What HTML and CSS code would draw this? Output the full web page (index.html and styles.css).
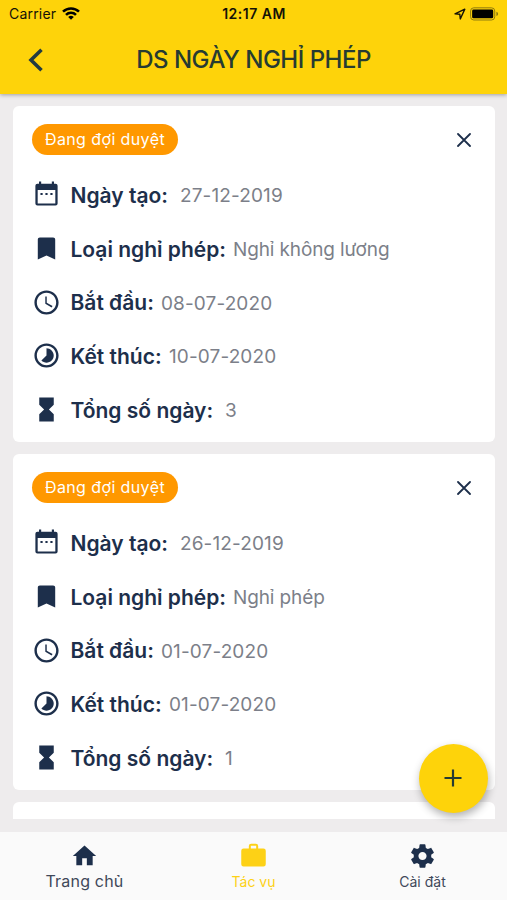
FILE: index.html
```html
<!DOCTYPE html>
<html lang="vi">
<head>
<meta charset="utf-8">
<meta name="viewport" content="width=device-width, initial-scale=1">
<title>DS NGÀY NGHỈ PHÉP</title>
<link rel="stylesheet" href="styles.css">
</head>
<body>
<svg class="defs" aria-hidden="true">
  <symbol id="calendar" viewBox="0 0 24 24"><path fill-rule="evenodd" d="M5.800 1.300h1.800V3h8.800V1.300h1.800V3h1.300a1.700 1.700 0 0 1 1.700 1.700v14.800a1.700 1.700 0 0 1-1.700 1.700h-15a1.700 1.700 0 0 1-1.700-1.700V4.700A1.700 1.700 0 0 1 4.500 3h1.300zM4.700 8.200v11.300h14.600V8.200zM7 10.700h1.800v1.800H7zm4.100 0h1.800v1.800h-1.800zm4.100 0H17v1.800h-1.800z"/></symbol>
  <symbol id="bookmark" viewBox="0 0 24 24"><path d="M17.500 2.800h-11C5.500 2.800 4.800 3.500 4.800 4.500V21l7.200-3.200 7.200 3.200V4.500c0-1-.7-1.700-1.700-1.700z"/></symbol>
  <symbol id="clock" viewBox="0 0 24 24"><path d="M11.990 2C6.470 2 2 6.480 2 12s4.470 10 9.990 10C17.520 22 22 17.520 22 12S17.520 2 11.990 2zM12 20c-4.420 0-8-3.580-8-8s3.580-8 8-8 8 3.580 8 8-3.580 8-8 8z"/><path d="M12.200 7H11v6l5.250 3.150.75-1.230-4.800-2.720z"/></symbol>
  <symbol id="timelapse" viewBox="0 0 24 24"><path d="M16.240 7.760C15.070 6.590 13.540 6 12 6v6l-4.240 4.240c2.340 2.340 6.140 2.340 8.490 0 2.340-2.340 2.340-6.140-.01-8.480zM12 2C6.480 2 2 6.480 2 12s4.480 10 10 10 10-4.480 10-10S17.520 2 12 2zm0 18c-4.420 0-8-3.580-8-8s3.580-8 8-8 8 3.580 8 8-3.580 8-8 8z"/></symbol>
  <symbol id="hourglass" viewBox="0 0 24 24"><path d="M6 2v6h.01L6 8.010 10 12l-4 4 .01.010H6V22h12v-5.990h-.01L18 16l-4-4 4-3.990-.01-.010H18V2z"/></symbol>
  <symbol id="close" viewBox="0 0 14 14"><path d="M1 1l12 12M13 1L1 13" fill="none" stroke="currentColor" stroke-width="1.800" stroke-linecap="round"/></symbol>
</svg>
<div class="app">
  <header class="header">
    <div class="status">
      <div class="carrier"><span>Carrier</span>
        <svg class="wifi" viewBox="0 0 18 13"><g fill="none" stroke="currentColor" stroke-width="2.500"><path d="M1 4.700a11.300 11.300 0 0 1 16 0"/><path d="M4 7.900a7 7 0 0 1 10 0"/></g><path d="M9 12.800L6.200 10a4 4 0 0 1 5.600 0z"/></svg>
      </div>
      <div class="time">12:17 AM</div>
      <div class="indicators">
        <svg class="location" viewBox="0 0 12 12"><path d="M1 5.900L10.800 1.200 6.300 10.900 5.800 6.200z" fill="none" stroke="currentColor" stroke-width="1.400" stroke-linejoin="round"/></svg>
        <svg class="battery" viewBox="0 0 30 14"><rect x=".6" y=".6" width="25" height="12.600" rx="3.300" fill="none" stroke="#8c7810" stroke-width="1"/><rect x="2.200" y="2.300" width="21.800" height="9.200" rx="1.500"/><path d="M27.300 4.700v4.400q1.800-.7 1.800-2.200t-1.800-2.200z" fill="#8c7810"/></svg>
      </div>
    </div>
    <div class="nav">
      <svg class="back" viewBox="0 0 16 24"><path d="M13.500 1.800L3 12l10.500 10.200" fill="none" stroke="currentColor" stroke-width="3.600"/></svg>
      <h1 class="title">DS NGÀY NGHỈ PHÉP</h1>
    </div>
  </header>
  <main class="list">
    <article class="card">
      <div class="card-head"><span class="badge">Đang đợi duyệt</span><svg class="close"><use href="#close"/></svg></div>
      <div class="row"><svg class="icon"><use href="#calendar"/></svg><span class="label created">Ngày tạo:</span><span class="value">27-12-2019</span></div>
      <div class="row"><svg class="icon"><use href="#bookmark"/></svg><span class="label type">Loại nghỉ phép:</span><span class="value words">Nghỉ không lương</span></div>
      <div class="row"><svg class="icon"><use href="#clock"/></svg><span class="label start">Bắt đầu:</span><span class="value">08-07-2020</span></div>
      <div class="row"><svg class="icon"><use href="#timelapse"/></svg><span class="label end">Kết thúc:</span><span class="value">10-07-2020</span></div>
      <div class="row"><svg class="icon"><use href="#hourglass"/></svg><span class="label total">Tổng số ngày:</span><span class="value">3</span></div>
    </article>
    <article class="card">
      <div class="card-head"><span class="badge">Đang đợi duyệt</span><svg class="close"><use href="#close"/></svg></div>
      <div class="row"><svg class="icon"><use href="#calendar"/></svg><span class="label created">Ngày tạo:</span><span class="value">26-12-2019</span></div>
      <div class="row"><svg class="icon"><use href="#bookmark"/></svg><span class="label type">Loại nghỉ phép:</span><span class="value words">Nghỉ phép</span></div>
      <div class="row"><svg class="icon"><use href="#clock"/></svg><span class="label start">Bắt đầu:</span><span class="value">01-07-2020</span></div>
      <div class="row"><svg class="icon"><use href="#timelapse"/></svg><span class="label end">Kết thúc:</span><span class="value">01-07-2020</span></div>
      <div class="row"><svg class="icon"><use href="#hourglass"/></svg><span class="label total">Tổng số ngày:</span><span class="value">1</span></div>
    </article>
    <article class="card"></article>
  </main>
  <button class="fab" aria-label="+"><svg viewBox="0 0 18 18"><path d="M9 .5v17M.5 9h17" stroke="currentColor" stroke-width="2.200"/></svg></button>
  <nav class="tabs">
    <a class="tab home"><svg viewBox="0 0 24 24"><path d="M10 20v-6h4v6h5v-8h3L12 3 2 12h3v8z"/></svg><span>Trang chủ</span></a>
    <a class="tab work"><svg viewBox="0 0 24 24"><path fill-rule="evenodd" d="M10 1.500h4a2 2 0 0 1 2 2v2h4.500a2 2 0 0 1 2 2v11.500a2 2 0 0 1-2 2h-17a2 2 0 0 1-2-2V7.500a2 2 0 0 1 2-2H8v-2a2 2 0 0 1 2-2zm-.3 1.800v2.200h4.600V3.300z"/></svg><span>Tác vụ</span></a>
    <a class="tab settings"><svg viewBox="0 0 24 24"><path d="M19.430 12.980c.04-.32.07-.64.07-.98s-.03-.66-.07-.98l2.110-1.650c.19-.15.24-.42.12-.64l-2-3.460c-.12-.22-.39-.3-.61-.22l-2.490 1c-.52-.4-1.080-.73-1.690-.98l-.38-2.650C14.460 2.180 14.250 2 14 2h-4c-.25 0-.46.18-.49.42l-.38 2.650c-.61.25-1.170.59-1.690.98l-2.490-1c-.23-.09-.49 0-.61.22l-2 3.460c-.13.22-.07.49.12.64l2.110 1.650c-.04.32-.07.65-.07.98s.03.66.07.98l-2.110 1.650c-.19.15-.24.42-.12.64l2 3.460c.12.22.39.3.61.22l2.490-1c.52.4 1.080.73 1.690.98l.38 2.650c.03.24.24.42.49.42h4c.25 0 .46-.18.49-.42l.38-2.650c.61-.25 1.170-.59 1.690-.98l2.490 1c.23.09.49 0 .61-.22l2-3.460c.12-.22.07-.49-.12-.64zM12 15.500c-1.930 0-3.500-1.570-3.500-3.500s1.570-3.500 3.500-3.500 3.500 1.570 3.500 3.500-1.570 3.500-3.500 3.500z"/></svg><span>Cài đặt</span></a>
  </nav>
</div>
</body>
</html>
```
FILE: styles.css
```css
* { box-sizing: border-box; }
body { margin: 0; font-family: Inter, "Noto Sans", sans-serif; color: #1d2f4b; }
svg { fill: currentColor; display: block; flex: none; }
.defs { display: none; }
.app { position: relative; width: 507px; height: 900px; display: flex; flex-direction: column; background: #eeeced; overflow: hidden; }

.header { height: 94px; flex: none; background: #fed30a; box-shadow: 0 1px 4px rgba(0, 0, 0, .32); z-index: 1; }
.status { height: 27px; padding: 0 8px 0 9px; display: grid; grid-template-columns: 1fr auto 1fr; align-items: center; color: #141207; font-size: 14px; }
.carrier { display: flex; align-items: center; gap: 6px; letter-spacing: .2px; }
.wifi { width: 18px; height: 13px; color: #000; }
.time { font-weight: 600; font-size: 14px; letter-spacing: .5px; }
.indicators { display: flex; justify-content: flex-end; align-items: center; gap: 4px; }
.location { width: 12px; height: 12px; }
.battery { width: 29px; height: 14px; color: #000; }
.nav { height: 65px; display: grid; grid-template-columns: 58px 1fr 58px; align-items: center; color: #263b32; }
.back { width: 16px; height: 24px; margin-left: 28px; color: #233b40; }
.title { margin: 0; font-size: 24px; font-weight: 500; letter-spacing: -.5px; text-align: center; white-space: nowrap; }

.list { height: 725px; flex: none; padding: 12px 12px 0 13px; display: flex; flex-direction: column; gap: 12px; overflow: hidden; }
.card { height: 336px; flex: none; padding: 18px 19px 0; background: #fff; border-radius: 6px; }
.card-head { height: 44px; display: flex; justify-content: space-between; align-items: flex-start; }
.badge { width: 146px; height: 31px; padding-bottom: 1px; border-radius: 16px; background: #ff9800; color: #fff; display: flex; align-items: center; justify-content: center; font-size: 16px; letter-spacing: .4px; white-space: nowrap; }
.close { width: 14px; height: 14px; margin: 9px 5px 0 0; }
.row { height: 53.700px; display: flex; align-items: center; white-space: nowrap; }
.icon { width: 29px; height: 29px; margin: 0 10px 0 -.5px; }
.label { font-size: 21px; font-weight: 600; padding-top: 1px; }
.created { width: 109.500px; }
.type { width: 162.500px; }
.start { width: 90.500px; }
.end { width: 98.500px; }
.total { width: 154.500px; }
.value { font-size: 19px; letter-spacing: .12px; color: #7c7f89; padding-top: 2px; }
.words { letter-spacing: -.12px; }

.fab { position: absolute; left: 419px; top: 744px; width: 69px; height: 69px; padding: 0 1px 1px 0; border: 0; border-radius: 50%; background: #fed30a; color: #263b32; display: grid; place-items: center; box-shadow: 1px 4px 8px rgba(0, 0, 0, .3); }
.fab svg { width: 18px; height: 18px; }
.tabs { margin-top: auto; height: 68px; background: #fafafa; display: grid; grid-template-columns: repeat(3, 1fr); }
.tab { display: flex; flex-direction: column; align-items: center; padding-top: 10px; font-size: 14px; color: #3f4859; }
.tab svg { width: 29px; height: 28px; color: #1d2f4b; }
.tab span { line-height: 24px; }
.home span { font-size: 16px; letter-spacing: .2px; line-height: 22px; }
.tab.work, .work svg { color: #fdd116; }
```
